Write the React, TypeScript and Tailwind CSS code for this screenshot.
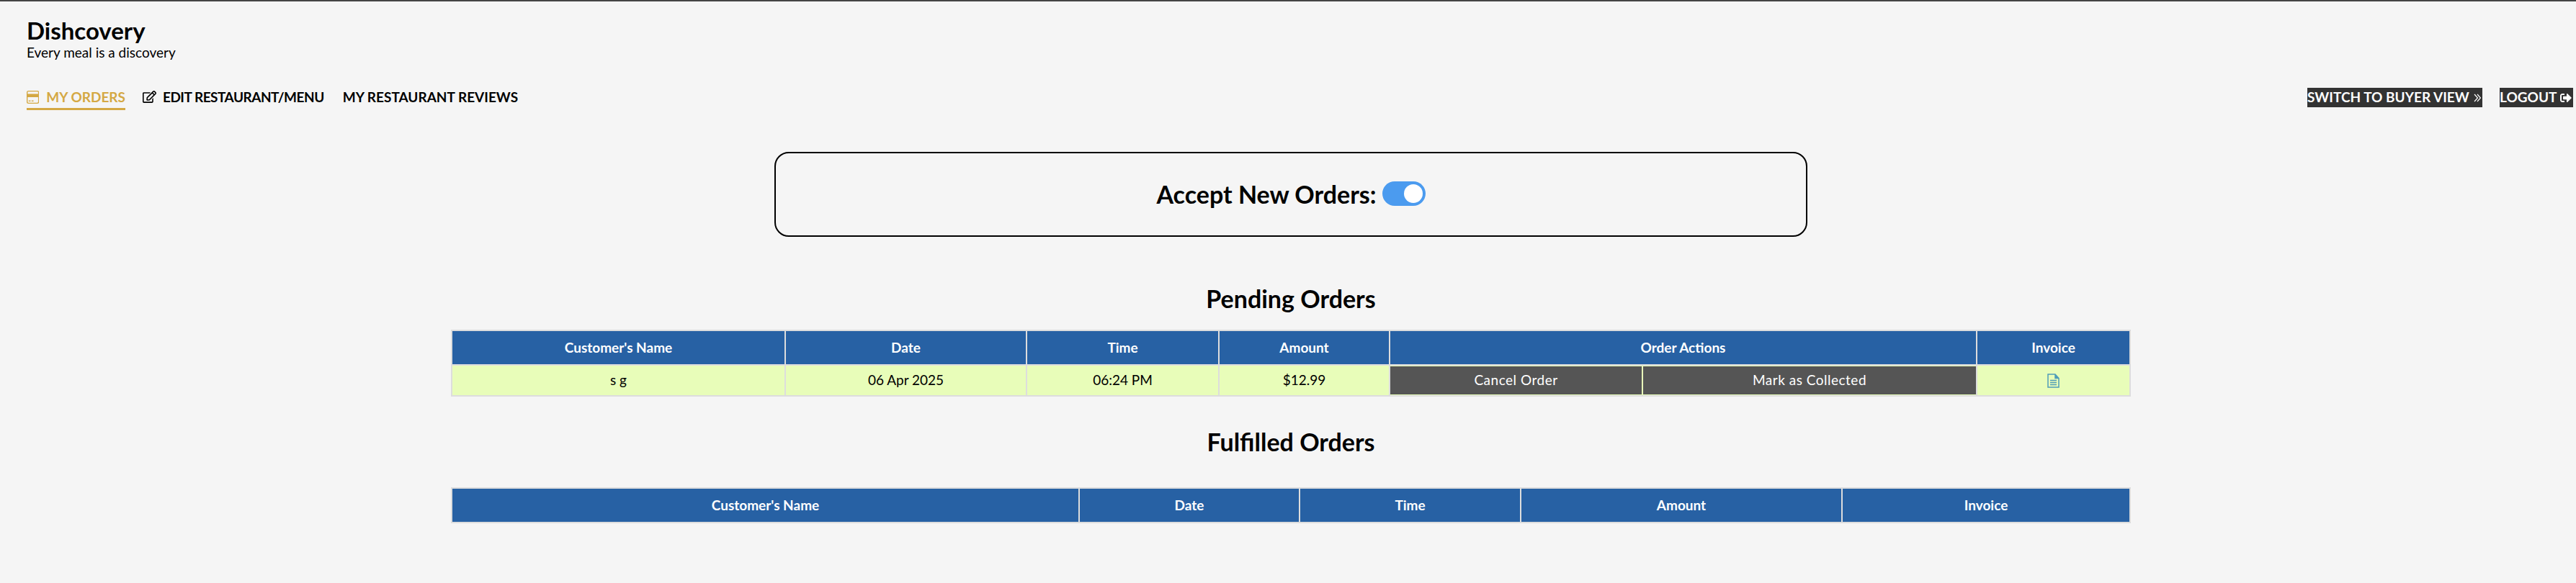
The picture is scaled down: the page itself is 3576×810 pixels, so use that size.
import React from "react";
import { FaRegEdit, FaSignOutAlt } from "react-icons/fa";

const pendingCols = [463, 335, 267, 237, 815, 213];
const fulfilledCols = [871, 306, 307, 446, 400];

const thClass =
  "h-[48px] border-2 border-[#dddddd] bg-[#2761a4] p-0 text-center text-[19px] font-bold text-white";

const CardIcon = () => (
  <svg width="19" height="22" viewBox="0 0 19 22" fill="none">
    <rect x="0.75" y="1.75" width="17.5" height="18.5" rx="2" stroke="#d4a843" strokeWidth="1.5" />
    <rect x="1" y="6" width="17" height="5" fill="#d4a843" />
    <rect x="3" y="16" width="3" height="1.5" fill="#d4a843" />
    <rect x="7.5" y="16" width="3" height="1.5" fill="#d4a843" />
  </svg>
);

const DocIcon = () => (
  <svg width="17" height="20" viewBox="0 0 17 20" fill="none" stroke="#4f9db8" strokeWidth="1.5">
    <path d="M1 1h10l5 5.5V19H1z" />
    <path d="M11 1v5.5h5" fill="#4f9db8" />
    <path d="M4 9.5h9M4 12.5h9M4 15.5h9" />
  </svg>
);

const DoubleRight = () => (
  <svg width="10" height="12" viewBox="0 0 10 12" fill="none" stroke="#ffffff" strokeWidth="1.2">
    <path d="M1 1l4.5 5L1 11M5 1l4.5 5L5 11" />
  </svg>
);

const OrderTable = ({ cols, children }: { cols: number[]; children: React.ReactNode }) => (
  <table className="w-[2330px] table-fixed border-collapse">
    <colgroup>
      {cols.map((w, i) => (
        <col key={i} style={{ width: w }} />
      ))}
    </colgroup>
    {children}
  </table>
);

export default function App() {
  return (
    <div className="min-h-[810px] border-t-2 border-[#444444] bg-[#f5f5f5] font-['Lato',sans-serif] text-black">
      <header className="px-[37px] pt-[21px]">
        <h1 className="text-[33px] leading-[38px] font-bold">Dishcovery</h1>
        <p className="text-[19px] leading-[24px]">Every meal is a discovery</p>
      </header>

      <nav className="mt-[37px] flex items-start justify-between pr-[4px] pl-[37px]">
        <ul className="mt-[2px] flex gap-[24px] text-[19px] leading-[22px] font-bold uppercase">
          <li className="flex h-[29px] w-[137px] items-start gap-[10px] border-b-[3px] border-[#d4a843] whitespace-nowrap text-[#d4a843]">
            <CardIcon />
            My Orders
          </li>
          <li className="flex items-start gap-[9px] tracking-[-0.5px]">
            <FaRegEdit className="mt-[1px] text-[19px]" />
            Edit Restaurant/Menu
          </li>
          <li className="ml-[2px]">My Restaurant Reviews</li>
        </ul>
        <div className="flex gap-[24px] text-[19px] font-bold uppercase text-white">
          <a className="flex h-[27px] w-[243px] items-center justify-between bg-[#333333] pr-[2px]">
            Switch to Buyer View
            <DoubleRight />
          </a>
          <a className="flex h-[27px] w-[102px] items-center justify-between bg-[#333333] pr-[2px]">
            Logout
            <FaSignOutAlt className="text-[16px]" />
          </a>
        </div>
      </nav>

      <main className="flex flex-col items-center pl-[8px]">
        <section className="mt-[58px] flex h-[118px] w-[1434px] items-center justify-center gap-[8px] rounded-[20px] border-2 border-black pb-[2px]">
          <span className="text-[34px] font-bold">Accept New Orders:</span>
          <span className="flex h-[34px] w-[60px] items-center justify-end rounded-full bg-[#4b9bef] pr-[4px]">
            <span className="h-[26px] w-[26px] rounded-full bg-white" />
          </span>
        </section>

        <h2 className="mt-[64px] mb-[21px] text-[34px] leading-[44px] font-bold">Pending Orders</h2>
        <OrderTable cols={pendingCols}>
          <thead>
            <tr>
              <th className={thClass}>Customer's Name</th>
              <th className={thClass}>Date</th>
              <th className={thClass}>Time</th>
              <th className={thClass}>Amount</th>
              <th className={thClass}>Order Actions</th>
              <th className={thClass}>Invoice</th>
            </tr>
          </thead>
          <tbody>
            <tr className="h-[43px] bg-[#e8fdb9] text-center text-[19px]">
              <td className="border-2 border-[#dddddd] p-0">s g</td>
              <td className="border-2 border-[#dddddd] p-0">06 Apr 2025</td>
              <td className="border-2 border-[#dddddd] p-0">06:24 PM</td>
              <td className="border-2 border-[#dddddd] p-0">$12.99</td>
              <td className="border-2 border-[#dddddd] p-0">
                <div className="flex h-[39px] gap-[2px] tracking-[0.5px] text-white">
                  <button className="w-[349px] bg-[#555555]">Cancel Order</button>
                  <button className="flex-1 bg-[#555555]">Mark as Collected</button>
                </div>
              </td>
              <td className="border-2 border-[#dddddd] p-0">
                <div className="flex justify-center">
                  <DocIcon />
                </div>
              </td>
            </tr>
          </tbody>
        </OrderTable>

        <h2 className="mt-[41px] mb-[41px] text-[34px] leading-[44px] font-bold">Fulfilled Orders</h2>
        <OrderTable cols={fulfilledCols}>
          <thead>
            <tr>
              <th className={thClass}>Customer's Name</th>
              <th className={thClass}>Date</th>
              <th className={thClass}>Time</th>
              <th className={thClass}>Amount</th>
              <th className={thClass}>Invoice</th>
            </tr>
          </thead>
        </OrderTable>
      </main>
    </div>
  );
}
